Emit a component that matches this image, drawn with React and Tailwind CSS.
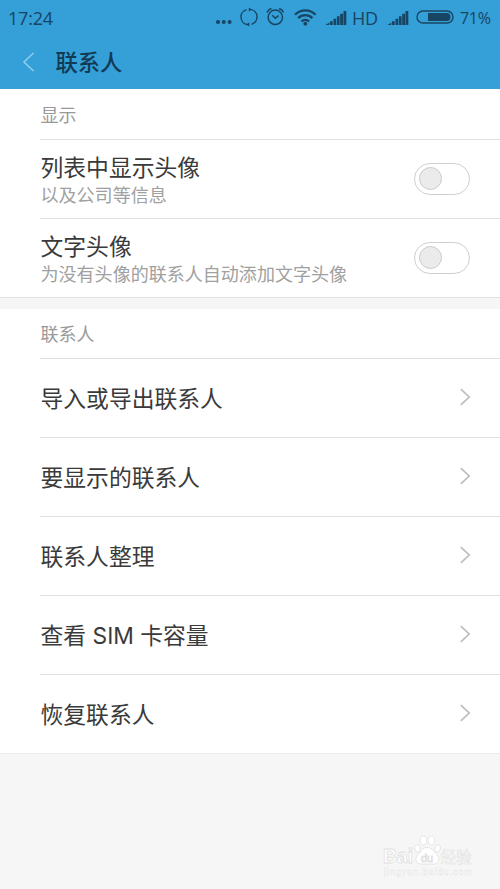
import { useState } from "react";

const links = ["导入或导出联系人", "要显示的联系人", "联系人整理", "查看 SIM 卡容量", "恢复联系人"];

function Signal() {
  return (
    <svg width="22" height="16" viewBox="0 0 22 16" fill="currentColor" className="shrink-0">
      <path d="M0.5 15L4.3 12.5V15zM5 11.3h2.7V15H5zM8.5 8.8h2.7V15H8.5zM11.9 6.3h2.7V15h-2.7zM15.2 3.7H18V15h-2.8zM18.5 1h2.8v14h-2.8z" />
    </svg>
  );
}

function StatusBar() {
  return (
    <div className="flex h-9 items-center pl-2 font-['Open_Sans',sans-serif] text-[#174563]">
      <span className="w-[207px] text-[18px] leading-[34px] tracking-[-0.2px]">17:24</span>
      <svg width="106" height="24" viewBox="0 0 106 24" fill="none" stroke="currentColor" className="mb-[2px] shrink-0">
        <g fill="currentColor" stroke="none">
          <circle cx="3" cy="17" r="2" />
          <circle cx="8.8" cy="17" r="2" />
          <circle cx="14.6" cy="17" r="2" />
        </g>
        {/* sync ring */}
        <g strokeWidth="1.4">
          <path d="M31.5 4.6A7.7 7.7 0 0 0 32.5 19.6M36.5 19.4A7.7 7.7 0 0 0 35.5 4.4" />
          <path d="M31.2 19.6l3-2v4zM36.8 4.4l-3-2v4z" fill="currentColor" stroke="none" />
        </g>
        {/* alarm clock */}
        <g strokeWidth="1.5">
          <circle cx="60.3" cy="12.3" r="7.2" />
          <path d="M57.3 10.3l3 3 3.3-2.7M52 7.5a7 7 0 0 1 4.5-4M68.6 7.5a7 7 0 0 0-4.5-4" />
        </g>
        {/* wifi */}
        <g strokeWidth="2.3">
          <path d="M80 9.7a14.4 14.4 0 0 1 20.6 0M83.2 13.1a10 10 0 0 1 14.2 0M86.5 16.500a5.500 5.500 0 0 1 7.600 0" />
          <circle cx="90.3" cy="18.700" r="1.900" fill="currentColor" stroke="none" />
        </g>
      </svg>
      <div className="ml-[4px] flex h-9 items-center">
        <div className="mb-px">
          <Signal />
        </div>
        <span className="ml-[5px] w-[30px] text-[18px] leading-[34px] tracking-[-0.3px]">HD</span>
        <div className="mb-px ml-[5px]">
          <Signal />
        </div>
      </div>
      <svg width="38" height="14" viewBox="0 0 38 14" className="mb-[2px] ml-[7px] shrink-0">
        <rect x="1" y="1" width="36" height="12" rx="6" fill="none" stroke="currentColor" strokeWidth="1.4" />
        <path d="M12 3h18.5a4 4 0 0 1 0 8H12z" fill="currentColor" />
      </svg>
      <span className="ml-[6px] text-[16px] leading-[34px] tracking-[-0.3px]">71%</span>
    </div>
  );
}

function SectionTitle({ children }) {
  return <h2 className="ml-10 border-b border-[#e0e0e0] pl-[0.5px] text-[18px] text-[#999]">{children}</h2>;
}

function ToggleRow({ title, note, last }) {
  const [on, setOn] = useState(false);

  return (
    <div className={`flex h-[79px] items-center border-b border-[#e0e0e0] pr-[30px] ${last ? "pl-[40.5px]" : "ml-10 pl-[0.5px]"}`}>
      <div className="flex-1">
        <p className="text-[22.8px] leading-[30px] text-[#3a3a3a]">{title}</p>
        <p className="text-[18.05px] leading-[24px] text-[#a0a0a0]">{note}</p>
      </div>
      <button
        type="button"
        role="switch"
        aria-checked={on}
        aria-label={title}
        onClick={() => setOn(!on)}
        className={`mb-px flex h-8 w-[56px] items-center rounded-full border border-[#cfcfcf] bg-white px-[4px] pb-px ${on ? "justify-end" : "justify-start"}`}
      >
        <span className="size-[23px] rounded-full border border-[#cbcbcb] bg-[#ebebeb]" />
      </button>
    </div>
  );
}

function LinkRow({ label, last }) {
  return (
    <div className={`flex h-[79px] items-center justify-between border-b pr-[29px] font-['Inter','Noto_Sans_CJK_SC',sans-serif] ${last ? "border-[#ececec] pl-[40.5px]" : "ml-10 border-[#e0e0e0] pl-[0.5px]"}`}>
      <span className="pt-[2px] text-[22.8px] leading-[30px] text-[#3a3a3a]">{label}</span>
      <svg width="12" height="18" viewBox="0 0 12 18" fill="none" stroke="#bdbdbd" strokeWidth="1.7" className="mb-[2px]">
        <path d="M1.8 1.2L10.2 9l-8.4 7.8" />
      </svg>
    </div>
  );
}

function Watermark() {
  return (
    <div className="mt-auto mb-[9px] ml-[383px] w-[92px] font-['Liberation_Sans','Noto_Sans_CJK_SC',sans-serif]">
      <svg width="92" height="47" viewBox="0 0 92 47" fill="#fff" stroke="#e0e0e0" strokeWidth="0.8">
        <text x="0" y="30" fontSize="21" fontWeight="bold" textLength="30" lengthAdjust="spacingAndGlyphs">Bai</text>
        <ellipse cx="34.5" cy="15.5" rx="2.8" ry="3.8" transform="rotate(-20 34.5 15.5)" />
        <ellipse cx="40.5" cy="7.5" rx="3.2" ry="4.5" />
        <ellipse cx="48.5" cy="7.5" rx="3.2" ry="4.5" />
        <ellipse cx="54.5" cy="15.5" rx="2.8" ry="3.8" transform="rotate(20 54.5 15.5)" />
        <path d="M44 14.5c-5 0-6 4-9 7-4 4-2 9.500 3 9.500h13c5 0 6-5.500 3-9.500-3-3-5-7-10-7z" />
        <text x="38" y="28.500" fontSize="11">du</text>
        <text x="57.5" y="29.500" fontSize="15.500" strokeWidth="0.5">经验</text>
        <text x="1" y="42" fontSize="9" strokeWidth="0.3" textLength="88">jingyan.baidu.com</text>
      </svg>
    </div>
  );
}

export default function App() {
  return (
    <div className="flex h-[889px] w-[500px] flex-col overflow-hidden bg-[#f6f6f6] font-['Noto_Sans_CJK_SC',sans-serif]">
      <header className="h-[89px] bg-[#359fd7]">
        <StatusBar />
        <div className="flex h-[51px] items-center pl-[22px]">
          <svg width="13" height="20" viewBox="0 0 13 20" fill="none" stroke="#8fcdf0" strokeWidth="1.6">
            <path d="M11.5 1L2 10l9.5 9" />
          </svg>
          <h1 className="ml-[20.5px] text-[22.3px] leading-[51px] font-medium text-[#123a54]">联系人</h1>
        </div>
      </header>

      <section className="bg-white leading-[50px]">
        <SectionTitle>显示</SectionTitle>
        <ToggleRow title="列表中显示头像" note="以及公司等信息" />
        <ToggleRow title="文字头像" note="为没有头像的联系人自动添加文字头像" last />
      </section>

      <section className="mt-[11px] bg-white leading-[49px]">
        <SectionTitle>联系人</SectionTitle>
        {links.map((label, i) => (
          <LinkRow key={label} label={label} last={i === links.length - 1} />
        ))}
      </section>

      <Watermark />
    </div>
  );
}
